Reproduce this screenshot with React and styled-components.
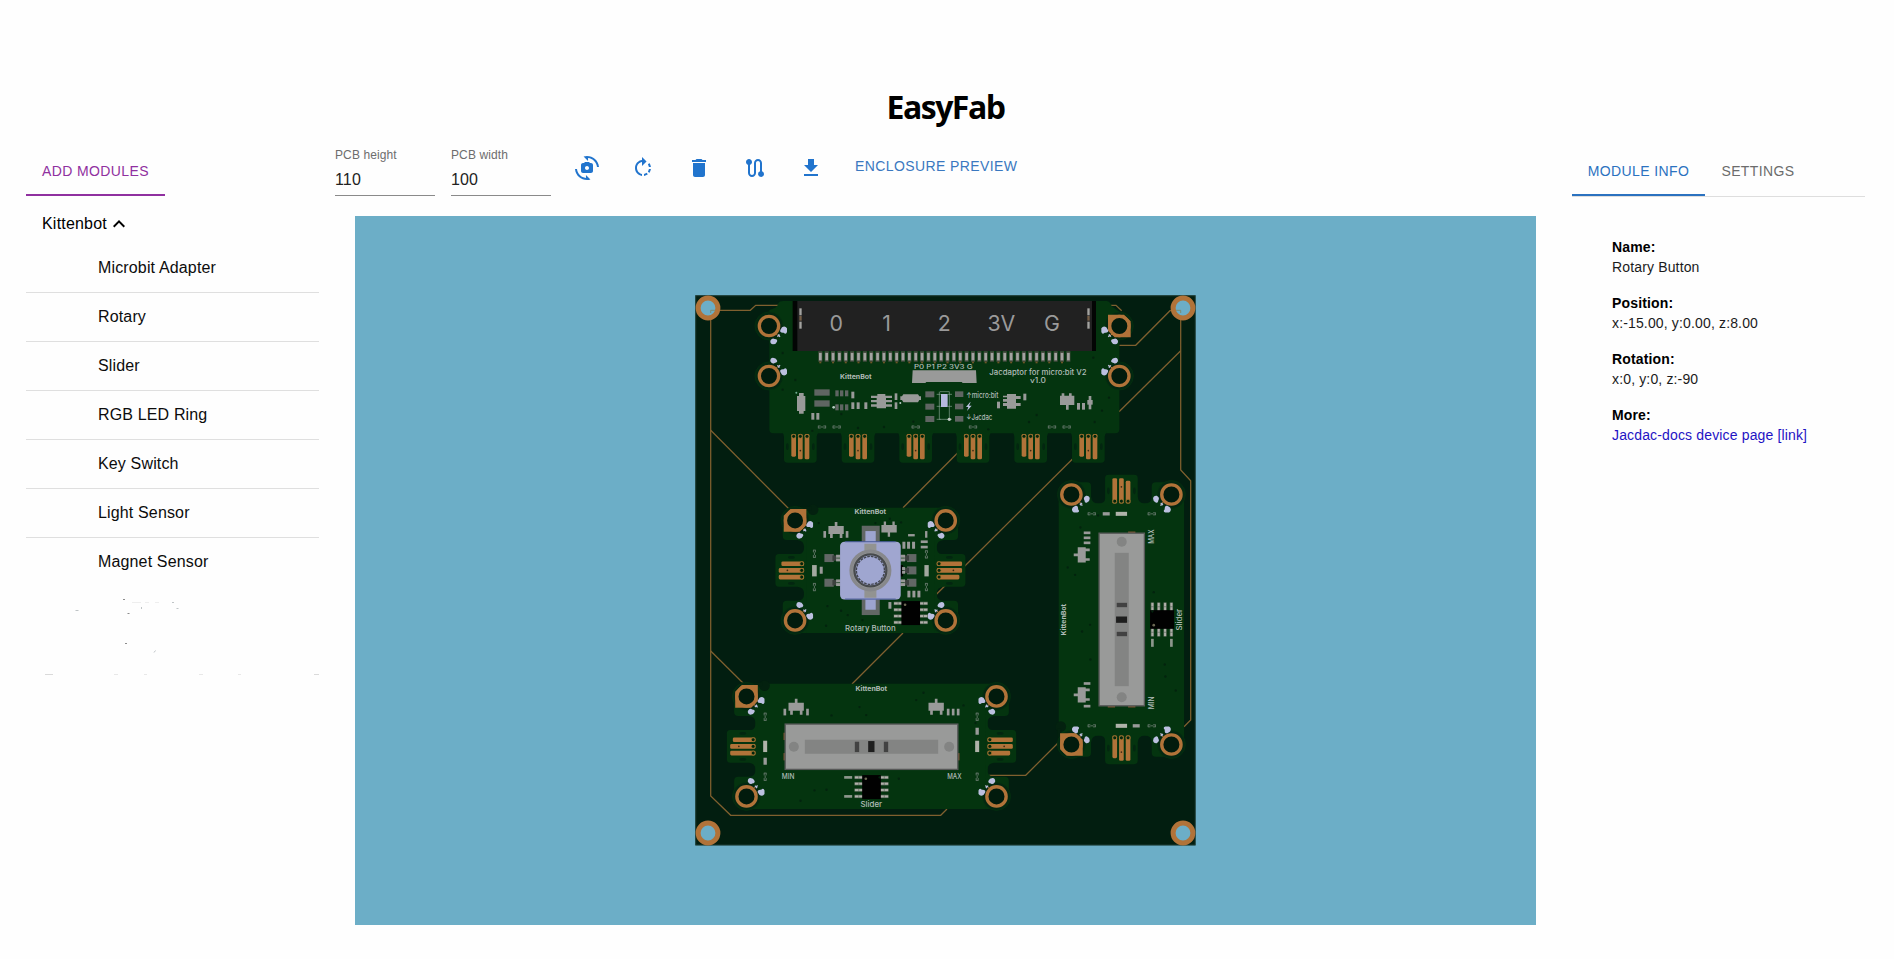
import React from "react";
import styled, { createGlobalStyle } from "styled-components";
import {
  MdCameraswitch,
  MdRotateRight,
  MdDelete,
  MdRoute,
  MdDownload,
  MdExpandLess,
} from "react-icons/md";

const GlobalStyle = createGlobalStyle`
  * { box-sizing: border-box; }
  body {
    margin: 0;
    background: #fefefe;
    color: #111;
    font-family: "Liberation Sans", Arial, sans-serif;
  }
`;

const Page = styled.div`
  width: 1894px;
  height: 959px;
  padding: 85px 29px 0 26px;
  overflow: hidden;
`;

const Title = styled.h1`
  margin: 0 0 19px;
  height: 44px;
  font: 700 32px/43px "Open Sans", "Noto Sans", sans-serif;
  letter-spacing: -1.5px;
  text-align: center;
  color: #000;
`;

const Columns = styled.div`
  display: grid;
  grid-template-columns: 293px 1221px 293px;
  column-gap: 16px;
  align-items: start;
`;

const Side = styled.aside`
  display: flex;
  flex-direction: column;
`;

const Tabs = styled.div`
  display: flex;
  height: ${(p) => (p.$ruled ? 49 : 48)}px;
  border-bottom: ${(p) => (p.$ruled ? "1px solid #dedede" : "none")};
`;

const Tab = styled.button`
  width: ${(p) => p.$width}px;
  height: 48px;
  padding: 0;
  border: 0;
  border-bottom: 2px solid ${(p) => (p.$active ? p.$color : "transparent")};
  background: none;
  color: ${(p) => p.$color};
  font: 14px/46px "Liberation Sans", Arial, sans-serif;
  letter-spacing: 0.4px;
  white-space: nowrap;
`;

const Group = styled.div`
  display: flex;
  align-items: center;
  height: 48px;
  padding: 8px 0 0 16px;
  font-size: 16px;
  letter-spacing: 0.2px;
  color: #000;
`;

const ModuleList = styled.ul`
  margin: 0;
  padding: 0;
  list-style: none;
`;

const ModuleItem = styled.li`
  height: 49px;
  padding-left: 72px;
  font-size: 16px;
  line-height: 48px;
  letter-spacing: 0.15px;
  color: #0c0c0c;
  border-bottom: 1px solid #dfdfdf;
  &:last-child { border-bottom-color: transparent; }
`;

const Specks = styled.svg`
  display: block;
  width: 293px;
  height: 95px;
`;

const Workspace = styled.main`
  display: flex;
  flex-direction: column;
  gap: 20px;
`;

const Toolbar = styled.div`
  display: flex;
  align-items: flex-start;
  gap: 16px;
  height: 48px;
`;

const Field = styled.label`
  display: flex;
  flex-direction: column;
  width: 100px;
  height: 48px;
  border-bottom: 1px solid #8a8a8a;
`;

const FieldLabel = styled.span`
  font-size: 12px;
  line-height: 14px;
  letter-spacing: 0.11px;
  color: #6d6d6d;
`;

const FieldValue = styled.span`
  margin-top: 8px;
  font-size: 16px;
  line-height: 20px;
  letter-spacing: 0.15px;
  color: #222;
`;

const IconButton = styled.button`
  display: flex;
  align-items: center;
  justify-content: center;
  width: 40px;
  height: 40px;
  padding: 0;
  border: 0;
  background: none;
  color: #2174cd;
  font-size: 24px;
`;

const TextButton = styled.button`
  margin-left: 8px;
  padding: 0;
  border: 0;
  background: none;
  color: #3a78c0;
  font: 14px/36px "Liberation Sans", Arial, sans-serif;
  letter-spacing: 0.4px;
`;

const Viewport = styled.div`
  display: flex;
  align-items: center;
  justify-content: center;
  height: 709px;
  margin: 0 20px;
  background: #6caec7;
`;

const Board = styled.svg`
  display: block;
  width: 501px;
  height: 551px;
`;

const Info = styled.dl`
  margin: 0;
  padding: 40px 0 0 40px;
  font-size: 14px;
  line-height: 20px;
  letter-spacing: 0.15px;
`;

const InfoName = styled.dt`
  font-weight: 700;
  color: #000;
`;

const InfoValue = styled.dd`
  margin: 0 0 16px;
  color: #1b1b1b;
`;

const DocLink = styled.a`
  color: #1f13c4;
  text-decoration: none;
`;

const COPPER = "#b17339";
const BOARD = "#021e10";
const GREEN = "#04340f";
const GREY = "#999a99";
const SILK = "#b2bdb9";
const PAD = "#bcc0e0";

const Silk = ({ x, y, w, size = 21, children, bold, color = SILK }) => (
  <text
    x={x}
    y={y}
    fontSize={size}
    fontWeight={bold ? 700 : 500}
    textLength={w}
    lengthAdjust="spacingAndGlyphs"
    fill={color}
  >
    {children}
  </text>
);

const Rects = ({ items, fill = GREY }) =>
  items.map(([x, y, w, h], i) => (
    <rect key={i} x={x} y={y} width={w} height={h} fill={fill} />
  ));

const Hole = ({ x, y, sx = 1, sy = 1, square }) => (
  <g transform={`translate(${x} ${y})`}>
    <circle r="42" fill="#032711" stroke="#04340f" strokeWidth="2" />
    {square && (
      <path
        d="M-34 34V-14L-14 -34H34V14L14 34Z"
        transform={sx < 0 ? "scale(-1 1)" : undefined}
        fill={COPPER}
      />
    )}
    <circle r="29" fill="#021b0d" stroke={COPPER} strokeWidth="10" />
    <g transform={`scale(${sx} ${sy})`} fill={PAD}>
      <path d="M20 22L30 32" stroke={COPPER} strokeWidth="3" />
      <path d="M39 4q9-6 15 3v11q-3 9-10 2q-13 1-10-8z" />
      <path d="M4 44q6-10 13-5q10 1 7 8q-3 8-12 8q-9-1-8-11z" />
      <path d="M25 32l7-6M28 25l5 8" stroke={PAD} strokeWidth="3.5" />
    </g>
  </g>
);

/* Three-finger edge connector pointing left, inner end at x = 0. */
const Fingers = ({ flip }) => (
  <g transform={flip ? "scale(-1 1)" : undefined}>
    {[-20, 0, 20].map((y, i) => {
      const len = i === (flip ? 2 : 0) ? 68 : 76;
      return (
        <g key={y}>
          <rect x={-len} y={y - 7} width={len} height="14" rx="4" fill={COPPER} />
          <circle cx="-7" cy={y} r="6" fill="#03250d" stroke="#a87a30" strokeWidth="2.5" />
        </g>
      );
    })}
    <circle cx="-50" cy="0" r="2.5" fill="#3c2a13" />
    <ellipse cx="-38" cy="-39" rx="10" ry="4" fill="#032610" />
    <ellipse cx="-38" cy="39" rx="10" ry="4" fill="#032610" />
  </g>
);

const ModuleBase = ({ ear }) => (
  <g>
    <rect x={-ear + 64} y="-188" width={2 * ear - 128} height="376" rx="4" fill={GREEN} />
    {[-1, 1].map((s) => (
      <g key={s} transform={`scale(${s} 1)`}>
        <path
          d={`M${ear - 70} -188H${ear - 35}A35 35 0 0 1 ${ear} -150V-103Q${ear} -91 ${ear - 12} -91H${ear - 44}Q${ear - 64} -89 ${ear - 64} -70Q${ear - 64} -49 ${ear - 50} -49H${ear + 12}Q${ear + 22} -49 ${ear + 22} -38V38Q${ear + 22} 49 ${ear + 12} 49H${ear - 44}Q${ear - 64} 51 ${ear - 64} 70Q${ear - 64} 91 ${ear - 44} 91H${ear - 12}Q${ear} 91 ${ear} 103V150A35 35 0 0 1 ${ear - 35} 188H${ear - 70}Z`}
          fill={GREEN}
        />
      </g>
    ))}
    <circle cx={-ear + 91} cy="-182" r="16" fill="#03210f" />
    <path d={`M${-ear + 20} -192h66v12h-66z`} fill="#03210f" />
    <Hole x={-ear + 37} y={-150} square />
    <Hole x={ear - 37} y={-150} sx={-1} />
    <Hole x={-ear + 37} y={150} sy={-1} />
    <Hole x={ear - 37} y={150} sx={-1} sy={-1} />
    <g transform={`translate(${-ear + 64} 0)`}><Fingers /></g>
    <g transform={`translate(${ear - 64} 0)`}><Fingers flip /></g>
  </g>
);

const Transistor = ({ x, y }) => (
  <path
    transform={`translate(${x} ${y})`}
    d="M-4 -24h8v12h19v24h-4v12h-8v-12h-21v12h-8v-12h-5v-24h19z"
    fill={GREY}
  />
);

const Chip = ({ x, y }) => (
  <g transform={`translate(${x} ${y})`}>
    {[-29, -10, 9, 28].map((dy) => (
      <g key={dy}>
        <rect x="-51" y={dy - 5} width="102" height="10" fill="#59685a" />
        <rect x="-50" y={dy - 3} width="11" height="6" fill="#b0b0aa" />
        <rect x="-37" y={dy - 3} width="74" height="6" fill="#b0b0aa" />
        <rect x="39" y={dy - 3} width="11" height="6" fill="#b0b0aa" />
      </g>
    ))}
    <rect x="-28" y="-36" width="56" height="72" fill="#010101" />
    <circle cx="-17" cy="-25" r="4" fill="#6d6a55" />
  </g>
);

const Vias = ({ points }) =>
  points.map(([x, y], i) => <circle key={i} cx={x} cy={y} r="3.5" fill="#03230e" />);

const Tiny = ({ x, y, vertical }) => (
  <path
    transform={`translate(${x} ${y})${vertical ? " rotate(90)" : ""}`}
    d="M-11 -3h7M-11 3h7M-11 -4v8M11 -3h-7M11 3h-7M11 -4v8M-4 0h8"
    stroke="#6d7d73"
    strokeWidth="2.6"
    fill="none"
  />
);

const SliderModule = ({ transform }) => (
  <g transform={transform}>
    <ModuleBase ear={412} />
    <Silk x={-48} y={-167} w={95} size={19} bold>KittenBot</Silk>
    <Transistor x={-226} y={-119} />
    <Transistor x={194} y={-119} />
    <Rects
      items={[
        [-264, -113, 8, 20], [-196, -113, 8, 20], [226, -113, 8, 20],
        [241, -113, 8, 20], [256, -113, 8, 20], [-324, 34, 10, 21],
        [312, -56, 10, 21],
      ]}
    />
    <Rects fill="#b0b3aa" items={[[-325, -17, 12, 34], [311, -17, 12, 34]]} />
    <Tiny x={-319} y={-89} vertical />
    <Tiny x={317} y={-89} vertical />
    <Tiny x={-319} y={91} vertical />
    <Tiny x={317} y={91} vertical />
    <Rects fill="#78512e" items={[[-264, -41, 5, 22], [-264, 20, 5, 22], [259, 20, 5, 22]]} />
    <rect x="-259" y="-67" width="518" height="136" fill={GREY} stroke="#575858" strokeWidth="4" />
    <rect x="-200" y="-20" width="400" height="42" fill="#838483" />
    <circle cx="-233" cy="1" r="15" fill="#838483" />
    <circle cx="233" cy="1" r="15" fill="#838483" />
    <Rects fill="#424242" items={[[-50, -14, 13, 31], [37, -14, 13, 31]]} />
    <rect x="-10" y="-16" width="19" height="33" fill="#1e1e1e" />
    <Silk x={-269} y={97} w={38}>MIN</Silk>
    <Silk x={227} y={97} w={43}>MAX</Silk>
    <Chip x={0} y={122} />
    <Rects fill="#8d978d" items={[[-82, 89, 24, 8], [-82, 146, 24, 8]]} />
    <Silk x={-33} y={183} w={65} size={23}>Slider</Silk>
    <Vias points={[[-36, -118], [-16, -94], [156, -161], [134, -139], [276, -123], [-120, -93], [-135, 130], [-171, 132], [-213, 163], [82, 97], [24, 93], [312, -70]]} />
  </g>
);

const RotaryModule = ({ transform }) => (
  <g transform={transform}>
    <ModuleBase ear={263} />
    <Silk x={-48} y={-169} w={95} size={19} bold>KittenBot</Silk>
    <Transistor x={-103} y={-121} />
    <path transform="translate(56 -124)" d="M-23 -12h7v-11h7v11h19v-11h7v11h6v22h-20v13h-7v-13h-19z" fill={GREY} />
    <Rects
      items={[
        [-141, -118, 8, 20], [-74, -118, 8, 20], [96, -86, 9, 21],
        [110, -86, 9, 21], [125, -86, 9, 21], [164, -118, 7, 20],
        [151, -90, 21, 8], [151, -74, 21, 8], [113, -109, 20, 7],
        [111, 61, 9, 20], [126, 61, 9, 20], [141, 61, 9, 20],
        [-152, -11, 9, 21], [54, 95, 9, 20],
      ]}
    />
    <Rects fill="#a3a8a0" items={[[-175, -16, 14, 34], [162, -16, 13, 34]]} />
    <Tiny x={-168} y={-50} vertical />
    <Tiny x={168} y={-48} vertical />
    <Tiny x={-168} y={50} vertical />
    <Tiny x={168} y={50} vertical />
    <Rects
      fill="#626765"
      items={[
        [-138, -49, 28, 24], [-138, 25, 28, 24], [110, -49, 28, 24],
        [110, -12, 28, 24], [110, 25, 28, 24], [-26, -134, 54, 50], [-26, 84, 54, 50],
      ]}
    />
    <Rects fill="#3c413f" items={[[-114, -45, 12, 16], [-114, 29, 12, 16], [102, -45, 14, 16], [102, -8, 14, 16], [102, 29, 14, 16]]} />
    <Rects fill="#010201" items={[[90, -16, 8, 34]]} />
    <Rects
      items={[
        [-103, -47, 14, 9], [-103, -36, 14, 9], [-103, 27, 14, 9], [-103, 38, 14, 9],
        [90, -47, 14, 9], [90, -36, 14, 9], [95, -10, 9, 9], [95, 1, 9, 9],
        [90, 27, 14, 9], [90, 38, 14, 9],
      ]}
    />
    <Rects fill="#9da4cf" items={[[-15, -118, 31, 36], [-15, 84, 31, 34]]} />
    <rect x="-91" y="-86" width="182" height="173" rx="13" fill="#a0a6d0" />
    <path d="M-76 -86h152M-76 86h152" stroke="#4a5a9c" strokeWidth="3" />
    <path d="M-18 -80h36v28h-36zM-18 54h36v28h-36z" fill="#929391" />
    <circle r="58" fill="#999a99" stroke="#87888b" strokeWidth="10" />
    <circle r="48" fill="#9fa6d0" stroke="#474a4d" strokeWidth="7" />
    <circle r="42" fill="none" stroke="#42454d" strokeWidth="4" strokeDasharray="8 3" />
    <Chip x={121} y={128} />
    <Silk x={-76} y={181} w={152} size={24}>Rotary Button</Silk>
    <Vias points={[[-155, -142], [15, -142], [92, -144], [58, -155], [-88, 121], [-68, 134], [-24, 149], [-133, 166], [-129, 107]]} />
  </g>
);

const connectors = [282, 455, 628, 800, 973, 1146];
const pins = Array.from({ length: 40 }, (_, i) => 391 + i * 19.08);

const AdapterModule = ({ transform }) => (
  <g transform={transform}>
    <path d="M238 445V75Q262 70 265 55Q268 48 280 48H1250Q1262 50 1265 64L1288 80V433Q1288 445 1276 445H250Q238 445 238 433Z" fill={GREEN} />
    <Hole x={237} y={123} />
    <Hole x={237} y={273} sy={-1} />
    <Hole x={1288} y={123} sx={-1} square />
    <Hole x={1288} y={273} sx={-1} sy={-1} />
    <rect x="308" y="48" width="910" height="150" fill="#030504" />
    <rect x="322" y="48" width="884" height="150" fill="#212121" />
    {[[439, "0"], [590, "1"], [763, "2"], [934, "3V"], [1086, "G"]].map(([x, label]) => (
      <text key={label} x={x} y="139" fontSize="64" textAnchor="middle" fill="#9a9a9a">
        {label}
      </text>
    ))}
    <Rects fill="#a3a3a0" items={[[328, 70, 7, 21], [328, 110, 7, 21], [1192, 70, 7, 21], [1192, 110, 7, 21]]} />
    <Rects fill="#755f48" items={[[328, 93, 7, 14], [1192, 93, 7, 14]]} />
    {pins.map((x, i) => (
      <g key={x}>
        <rect x={x - 6} y="199" width="12" height="31" fill="#4b4f45" />
        <rect x={x - 4} y="204" width="8" height="22" fill="#a3a4a1" />
        {i % 2 === 0 && <rect x={x - 3} y="230" width="6" height="5" fill="#6d5427" />}
      </g>
    ))}
    <Silk x={672} y={251} w={176} size={19}>P0 P1 P2 3V3 G</Silk>
    <path d="M668 256h190l2 38h-42l-3-3h-106l-3 3h-40z" fill={GREY} />
    <Silk x={450} y={281} w={95} size={19} bold>KittenBot</Silk>
    <Silk x={898} y={270} w={292} size={23}>Jacdaptor for micro:bit V2</Silk>
    <Silk x={1020} y={293} w={48} size={21}>v1.0</Silk>
    <Silk x={829} y={338} w={96} size={22}>↑micro:bit</Silk>
    <Silk x={829} y={404} w={78} size={22}>↓Jacdac</Silk>
    <path d="M840 352l-12 14h7l-4 12l14-16h-8l5-10z" fill={PAD} />
    <Rects fill="#5f6562" items={[[373, 313, 46, 19], [373, 346, 46, 19], [706, 319, 27, 18], [706, 356, 27, 18], [706, 393, 27, 18], [795, 319, 25, 17], [795, 356, 25, 17], [795, 393, 25, 17], [436, 316, 10, 18], [450, 316, 10, 18], [465, 316, 10, 18], [436, 358, 10, 18], [450, 358, 10, 18], [465, 358, 10, 18]]} />
    <Rects items={[[484, 320, 9, 20], [484, 352, 9, 20], [500, 352, 9, 20], [523, 352, 9, 20], [364, 384, 9, 20], [379, 384, 9, 20], [614, 325, 8, 20], [614, 352, 8, 20], [921, 350, 9, 20], [1000, 326, 9, 20], [1161, 354, 9, 20], [1176, 354, 9, 20], [1196, 333, 8, 40], [1192, 345, 16, 14]]} />
    <path d="M327 324h14v9h5v45h-5v8h-14v-8h-6v-45h6z" fill={GREY} />
    <path d="M562 327h24v5h20v7h-18v6h18v7h-18v6h18v7h-18v5h-28v-5h-17v-7h17v-6h-17v-7h17v-6h-17v-7h19z" fill={GREY} />
    <path d="M640 328h44l4 6h5v11h-5l-4 7h-44l-4-7h-5v-11h5z" fill={GREY} />
    <path d="M951 327h27v6h14v9h-14v12h14v9h-14v8h-27v-8h-12v-9h12v-4h-12v-8h12v-5h-12v-5h12z" fill={GREY} />
    <path d="M1115 325h8v7h14v-7h8v7h8v28h-17v14h-8v-14h-18v-28h5z" fill={GREY} />
    <path d="M750 320h28v83h-30v-83M740 328h12M774 328h12M740 364h12M774 364h12M740 403h12M774 403h12" fill="none" stroke="#8aa394" strokeWidth="2" />
    <rect x="753" y="327" width="20" height="39" fill="#b6b9df" />
    <circle cx="778" cy="403" r="5" fill="#c2cbc5" />
    <circle cx="431" cy="367" r="4" fill="#b8ccc2" />
    <circle cx="631" cy="354" r="3" fill="#b8ccc2" />
    <circle cx="319" cy="323" r="3" fill="#71ac92" />
    {[396, 440, 677, 849, 1086, 1130].map((x) => <Tiny key={x} x={x} y={426} />)}
    <Vias points={[[316, 285], [278, 204], [278, 314], [367, 438], [670, 410], [504, 429], [582, 426], [454, 387], [895, 433], [860, 390], [1040, 390], [1017, 411], [1214, 411], [1257, 338], [1236, 377], [1210, 218]]} />
    {connectors.map((x) => (
      <g key={x}>
        <path d={`M${x - 6} 440H${x + 105}Q${x + 98} 447 ${x + 98} 455V523Q${x + 98} 533 ${x + 88} 533H${x + 10}Q${x} 533 ${x} 523V455Q${x} 447 ${x - 6} 440Z`} fill={GREEN} />
        <g transform={`translate(${x + 49} 447) rotate(-90)`}><Fingers /></g>
      </g>
    ))}
  </g>
);

const traces = [
  "710.7 310.3 750.3 310.3 755.7 305.3 779 305.3",
  "710.7 310.3 710.7 796 730.7 815.3 940.7 815.3 947 809",
  "710.7 430.3 790 510",
  "710.7 651 745 685",
  "852 684 903 633",
  "903 507.7 958 452.5",
  "935.7 595 1073 458.5",
  "1119 411.7 1180.7 350.7",
  "1119.3 345.3 1135.7 345.3 1170 310.7 1180.7 310.7 1180.7 470 1190.7 480.7 1190.7 720 1184 726.7",
  "1110.7 305.3 1116 305.3 1121.7 310.7",
  "989.3 775.3 1025.7 775.3 1060 741",
];

const mounts = [[708, 308], [1183, 308], [708, 833], [1183, 833]];

const BoardDrawing = () => (
  <Board viewBox="695 295 501 551" fontFamily="Inter, 'DejaVu Sans', sans-serif">
    <rect x="695.3" y="295.3" width="500.2" height="550" fill={BOARD} />
    <rect x="695.8" y="295.8" width="499.4" height="549.2" fill="none" stroke="#25443f" strokeWidth="0.8" />
    {traces.map((t) => (
      <polyline key={t} points={t} fill="none" stroke="#80602f" strokeWidth="1.25" />
    ))}
    {mounts.map(([x, y]) => (
      <circle key={`${x}-${y}`} cx={x} cy={y} r="9.9" fill="#6caec7" stroke={COPPER} strokeWidth="5" />
    ))}
    <path d="M710.7 313V310.3H715M1180.7 313V310.3H1176" fill="none" stroke="#7d8b70" strokeWidth="1" />
    <AdapterModule transform="translate(690 285) scale(.33333)" />
    <RotaryModule transform="translate(870.4 570.4) scale(.33333)" />
    <SliderModule transform="translate(871.5 746.4) scale(.33333)" />
    <SliderModule transform="translate(1121.4 619.5) rotate(-90) scale(.33333)" />
  </Board>
);

const modules = [
  "Microbit Adapter",
  "Rotary",
  "Slider",
  "RGB LED Ring",
  "Key Switch",
  "Light Sensor",
  "Magnet Sensor",
];

const details = [
  ["Name:", "Rotary Button"],
  ["Position:", "x:-15.00, y:0.00, z:8.00"],
  ["Rotation:", "x:0, y:0, z:-90"],
];

const tools = [
  ["Flip view", MdCameraswitch],
  ["Rotate", MdRotateRight],
  ["Delete", MdDelete],
  ["Route", MdRoute],
  ["Download", MdDownload],
];

export default function App() {
  return (
    <Page>
      <GlobalStyle />
      <Title>EasyFab</Title>
      <Columns>
        <Side>
          <Tabs>
            <Tab $width={139} $color="#9030a0" $active>ADD MODULES</Tab>
          </Tabs>
          <Group>
            Kittenbot
            <MdExpandLess size={24} />
          </Group>
          <ModuleList>
            {modules.map((name) => (
              <ModuleItem key={name}>{name}</ModuleItem>
            ))}
          </ModuleList>
          <Specks viewBox="26 587 293 95" fill="none" strokeWidth="1">
            <path d="M123 599.5h2M127.500 613.500h2M125 643.500h2" stroke="#8c8c8c" />
            <path d="M154 652.500l1.500-2M141.500 607v2M176.500 608.500h2M172 602.500h2M75.500 610.500h3" stroke="#bfc4c6" />
            <path d="M132 602.500h9M145 602.500h4M155 602.500h4" stroke="#eeeeee" />
            <path d="M45 674.500h8M314 674.500h5" stroke="#dadada" />
            <path d="M114 674.500h4M144 674.500h3M199 674.500h4M238 674.500h3" stroke="#e8e8e8" />
          </Specks>
        </Side>
        <Workspace>
          <Toolbar>
            <Field>
              <FieldLabel>PCB height</FieldLabel>
              <FieldValue>110</FieldValue>
            </Field>
            <Field>
              <FieldLabel>PCB width</FieldLabel>
              <FieldValue>100</FieldValue>
            </Field>
            {tools.map(([label, Icon]) => (
              <IconButton key={label} aria-label={label}>
                <Icon />
              </IconButton>
            ))}
            <TextButton>ENCLOSURE PREVIEW</TextButton>
          </Toolbar>
          <Viewport>
            <BoardDrawing />
          </Viewport>
        </Workspace>
        <Side>
          <Tabs $ruled>
            <Tab $width={133} $color="#2b72c0" $active>MODULE INFO</Tab>
            <Tab $width={106} $color="#6c6c6c">SETTINGS</Tab>
          </Tabs>
          <Info>
            {details.map(([name, value]) => (
              <React.Fragment key={name}>
                <InfoName>{name}</InfoName>
                <InfoValue>{value}</InfoValue>
              </React.Fragment>
            ))}
            <InfoName>More:</InfoName>
            <InfoValue>
              <DocLink>Jacdac-docs device page [link]</DocLink>
            </InfoValue>
          </Info>
        </Side>
      </Columns>
    </Page>
  );
}
